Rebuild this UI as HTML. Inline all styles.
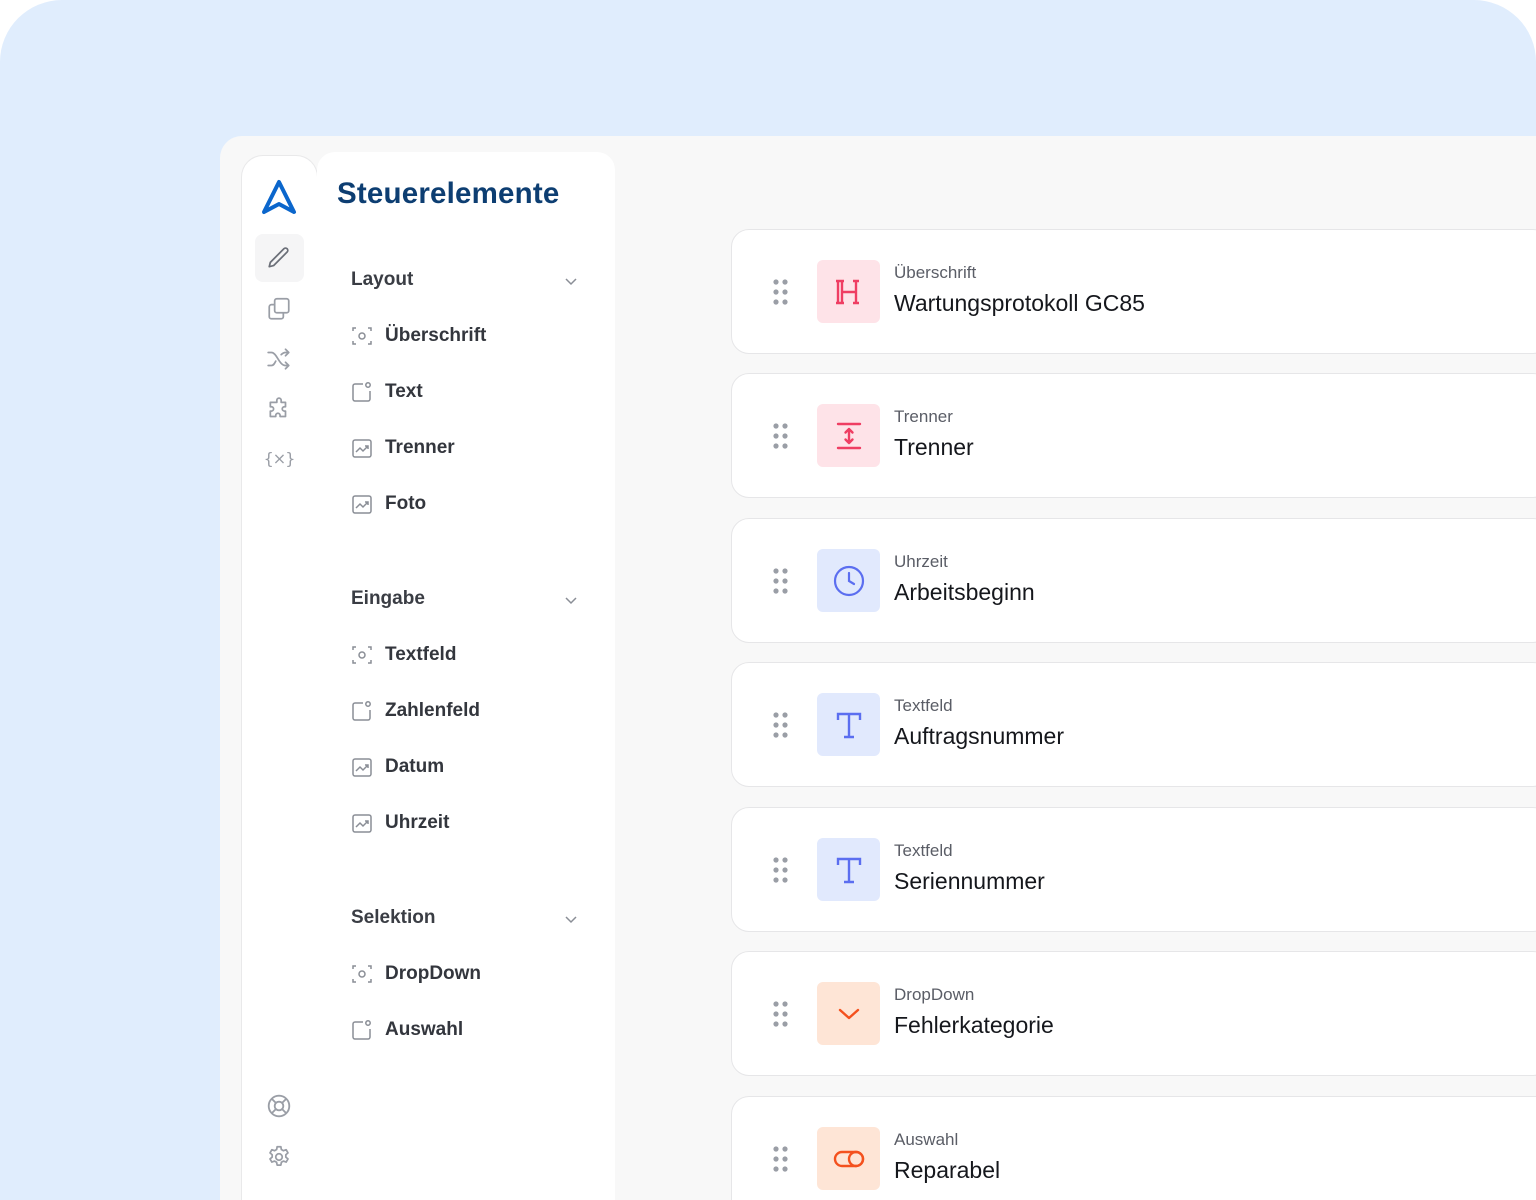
<!DOCTYPE html>
<html><head><meta charset="utf-8"><style>
*{box-sizing:border-box;margin:0;padding:0}
html,body{width:1536px;height:1200px;overflow:hidden;background:#fff;font-family:"Liberation Sans",sans-serif;position:relative}
.outer{position:absolute;left:0;top:0;width:1536px;height:1200px;background:#e0edfd;border-radius:62px 62px 0 0}
.app{position:absolute;left:220px;top:136px;width:1316px;height:1064px;background:#f8f8f8;border-radius:22px 0 0 0}
.rail{position:absolute;left:241px;top:155px;width:77px;height:1045px;background:#fff;border:1.5px solid #e9e9ea;border-bottom:none;border-radius:22px 22px 0 0}
.panel{position:absolute;left:317px;top:152px;width:298px;height:1048px;background:#fff;border-radius:18px 18px 0 0}
.ri{position:absolute;left:0;width:74px;display:flex;justify-content:center}
.h1{position:absolute;left:337px;top:177px;font-size:29.5px;font-weight:bold;color:#0d3e72;letter-spacing:0.2px}
.sec{position:absolute;left:351px;font-size:19px;font-weight:bold;color:#3a3d44}
.chev{position:absolute;left:564px}
.item{position:absolute;left:351px;font-size:19px;font-weight:bold;color:#33363d;display:flex;align-items:center}
.item svg{margin-right:12px}
.card{position:absolute;left:731px;width:820px;height:125px;background:#fff;border:1.5px solid #e6e6e8;border-radius:18px}
.dots{position:absolute;left:41px;top:49px}
.ic{position:absolute;left:85px;top:30px;width:63px;height:63px;border-radius:6px;display:flex;align-items:center;justify-content:center}
.lab{position:absolute;left:162px;top:33px;font-size:17px;color:#5a5d66}
.tit{position:absolute;left:162px;top:60px;font-size:23px;color:#15171c}
</style></head><body>
<div class="outer"></div>
<div class="app"></div>
<div class="rail">
 <div class="ri" style="top:22px"><svg width="40" height="40" viewBox="0 0 40 40"><path d="M20 4 L35 34 L20 26 L5 34 Z" fill="none" stroke="#0b66cc" stroke-width="4" stroke-linejoin="round"/></svg></div>
 <div style="position:absolute;left:13px;top:78px;width:49px;height:48px;background:#f5f5f6;border-radius:8px"></div>
 <div class="ri" style="top:89px"><svg width="26" height="26" viewBox="0 0 24 24" fill="none" stroke="#6b6f78" stroke-width="1.6" stroke-linecap="round" stroke-linejoin="round"><path d="M16.5 3.5a2.1 2.1 0 0 1 3 3L7 19l-4 1 1-4Z"/></svg></div>
 <div class="ri" style="top:140px"><svg width="26" height="26" viewBox="0 0 24 24" fill="none" stroke="#9a9ea6" stroke-width="1.6" stroke-linejoin="round"><rect x="8" y="2.5" width="13" height="13" rx="2"/><path d="M16 15.5V19a2 2 0 0 1-2 2H5a2 2 0 0 1-2-2v-9a2 2 0 0 1 2-2h3"/></svg></div>
 <div class="ri" style="top:190px"><svg width="26" height="26" viewBox="0 0 24 24" fill="none" stroke="#9a9ea6" stroke-width="1.6" stroke-linecap="round" stroke-linejoin="round"><path d="M2 6h3c5 0 7 12 13 12h3M18 15l3 3-3 3M2 18h3c2 0 3-2 4-4M14 8c1-1 2-2 4-2h3M18 3l3 3-3 3"/></svg></div>
 <div class="ri" style="top:241px"><svg width="26" height="26" viewBox="0 0 24 24" fill="none" stroke="#9a9ea6" stroke-width="1.6" stroke-linejoin="round"><path d="M10 3a2 2 0 0 1 4 0v2h4v4h-1a2 2 0 0 0 0 4h1v5h-5v-1a2 2 0 0 0-4 0v1H4v-5h1a2 2 0 0 0 0-4H4V5h6Z"/></svg></div>
 <div class="ri" style="top:293px;font-size:16px;color:#9a9ea6;font-family:'DejaVu Sans',sans-serif;letter-spacing:-1px">{×}</div>
 <div class="ri" style="top:937px"><svg width="26" height="26" viewBox="0 0 24 24" fill="none" stroke="#9a9ea6" stroke-width="1.7"><circle cx="12" cy="12" r="9.5"/><circle cx="12" cy="12" r="4"/><path d="M5.3 5.3l3.9 3.9M14.8 14.8l3.9 3.9M18.7 5.3l-3.9 3.9M9.2 14.8l-3.9 3.9"/></svg></div>
 <div class="ri" style="top:988px"><svg width="26" height="26" viewBox="0 0 24 24" fill="none" stroke="#9a9ea6" stroke-width="1.6" stroke-linejoin="round"><circle cx="12" cy="12" r="3"/><path d="M10.3 2.5h3.4l.5 2.6 1.9 1.1 2.5-.9 1.7 2.9-2 1.7v2.2l2 1.7-1.7 2.9-2.5-.9-1.9 1.1-.5 2.6h-3.4l-.5-2.6-1.9-1.1-2.5.9-1.7-2.9 2-1.7v-2.2l-2-1.7 1.7-2.9 2.5.9 1.9-1.1Z"/></svg></div>
</div>
<div class="panel"></div>
<div class="h1">Steuerelemente</div>

<div class="sec" style="top:269px">Layout</div>
<div class="sec" style="top:588px">Eingabe</div>
<div class="sec" style="top:907px">Selektion</div>
<svg class="chev" style="top:274px" width="14" height="14" viewBox="0 0 14 14"><path d="M2 5l5 5 5-5" fill="none" stroke="#8a8e96" stroke-width="1.5"/></svg>
<svg class="chev" style="top:593px" width="14" height="14" viewBox="0 0 14 14"><path d="M2 5l5 5 5-5" fill="none" stroke="#8a8e96" stroke-width="1.5"/></svg>
<svg class="chev" style="top:912px" width="14" height="14" viewBox="0 0 14 14"><path d="M2 5l5 5 5-5" fill="none" stroke="#8a8e96" stroke-width="1.5"/></svg>

<div class="item" style="top:325px"><svg width="22" height="22" viewBox="0 0 22 22" fill="none" stroke="#8a8e96" stroke-width="1.5"><path d="M2 6V3h3M17 3h3v3M20 16v3h-3M5 19H2v-3"/><circle cx="11" cy="11" r="3"/></svg>Überschrift</div>
<div class="item" style="top:381px"><svg width="22" height="22" viewBox="0 0 22 22" fill="none" stroke="#8a8e96" stroke-width="1.5"><path d="M12 3H4a2 2 0 0 0-2 2v13a2 2 0 0 0 2 2h13a2 2 0 0 0 2-2v-8"/><circle cx="17" cy="4" r="2.2"/></svg>Text</div>
<div class="item" style="top:437px"><svg width="22" height="22" viewBox="0 0 22 22" fill="none" stroke="#8a8e96" stroke-width="1.5"><rect x="2" y="3" width="18" height="17" rx="2"/><path d="M5 15l4-4 3 3 5-5M14 9h3v3"/></svg>Trenner</div>
<div class="item" style="top:493px"><svg width="22" height="22" viewBox="0 0 22 22" fill="none" stroke="#8a8e96" stroke-width="1.5"><rect x="2" y="3" width="18" height="17" rx="2"/><path d="M5 15l4-4 3 3 5-5M14 9h3v3"/></svg>Foto</div>

<div class="item" style="top:644px"><svg width="22" height="22" viewBox="0 0 22 22" fill="none" stroke="#8a8e96" stroke-width="1.5"><path d="M2 6V3h3M17 3h3v3M20 16v3h-3M5 19H2v-3"/><circle cx="11" cy="11" r="3"/></svg>Textfeld</div>
<div class="item" style="top:700px"><svg width="22" height="22" viewBox="0 0 22 22" fill="none" stroke="#8a8e96" stroke-width="1.5"><path d="M12 3H4a2 2 0 0 0-2 2v13a2 2 0 0 0 2 2h13a2 2 0 0 0 2-2v-8"/><circle cx="17" cy="4" r="2.2"/></svg>Zahlenfeld</div>
<div class="item" style="top:756px"><svg width="22" height="22" viewBox="0 0 22 22" fill="none" stroke="#8a8e96" stroke-width="1.5"><rect x="2" y="3" width="18" height="17" rx="2"/><path d="M5 15l4-4 3 3 5-5M14 9h3v3"/></svg>Datum</div>
<div class="item" style="top:812px"><svg width="22" height="22" viewBox="0 0 22 22" fill="none" stroke="#8a8e96" stroke-width="1.5"><rect x="2" y="3" width="18" height="17" rx="2"/><path d="M5 15l4-4 3 3 5-5M14 9h3v3"/></svg>Uhrzeit</div>

<div class="item" style="top:963px"><svg width="22" height="22" viewBox="0 0 22 22" fill="none" stroke="#8a8e96" stroke-width="1.5"><path d="M2 6V3h3M17 3h3v3M20 16v3h-3M5 19H2v-3"/><circle cx="11" cy="11" r="3"/></svg>DropDown</div>
<div class="item" style="top:1019px"><svg width="22" height="22" viewBox="0 0 22 22" fill="none" stroke="#8a8e96" stroke-width="1.5"><path d="M12 3H4a2 2 0 0 0-2 2v13a2 2 0 0 0 2 2h13a2 2 0 0 0 2-2v-8"/><circle cx="17" cy="4" r="2.2"/></svg>Auswahl</div>

<div class="card" style="top:229px"><svg class="dots" width="16" height="26" viewBox="0 0 16 26" fill="#9a9ea6"><circle cx="3" cy="3" r="2.6"/><circle cx="12" cy="3" r="2.6"/><circle cx="3" cy="13" r="2.6"/><circle cx="12" cy="13" r="2.6"/><circle cx="3" cy="23" r="2.6"/><circle cx="12" cy="23" r="2.6"/></svg>
<div class="ic" style="background:#fee3e8"><svg width="28" height="28" viewBox="0 0 28 28" fill="none" stroke="#ef3e63" stroke-width="2.4"><path d="M3 3v22M7 3v22M7 14h14M21 3v22M1 3h8M1 25h8M18 3h6M18 25h6"/></svg></div>
<div class="lab">Überschrift</div><div class="tit">Wartungsprotokoll GC85</div></div>

<div class="card" style="top:373px"><svg class="dots" width="16" height="26" viewBox="0 0 16 26" fill="#9a9ea6"><circle cx="3" cy="3" r="2.6"/><circle cx="12" cy="3" r="2.6"/><circle cx="3" cy="13" r="2.6"/><circle cx="12" cy="13" r="2.6"/><circle cx="3" cy="23" r="2.6"/><circle cx="12" cy="23" r="2.6"/></svg>
<div class="ic" style="background:#fee3e8"><svg width="28" height="30" viewBox="0 0 28 30" fill="none" stroke="#ef3e63" stroke-width="2.4" stroke-linecap="round" stroke-linejoin="round"><path d="M3 3h22M3 27h22M14 8v14M10.5 11.5 14 8l3.5 3.5M10.5 18.5 14 22l3.5-3.5"/></svg></div>
<div class="lab">Trenner</div><div class="tit">Trenner</div></div>

<div class="card" style="top:518px"><svg class="dots" width="16" height="26" viewBox="0 0 16 26" fill="#9a9ea6"><circle cx="3" cy="3" r="2.6"/><circle cx="12" cy="3" r="2.6"/><circle cx="3" cy="13" r="2.6"/><circle cx="12" cy="13" r="2.6"/><circle cx="3" cy="23" r="2.6"/><circle cx="12" cy="23" r="2.6"/></svg>
<div class="ic" style="background:#e1e9fd"><svg width="32" height="32" viewBox="0 0 32 32" fill="none" stroke="#5b6ef0" stroke-width="2.2" stroke-linecap="round"><circle cx="16" cy="16" r="14"/><path d="M16 8v8l5 3"/></svg></div>
<div class="lab">Uhrzeit</div><div class="tit">Arbeitsbeginn</div></div>

<div class="card" style="top:662px"><svg class="dots" width="16" height="26" viewBox="0 0 16 26" fill="#9a9ea6"><circle cx="3" cy="3" r="2.6"/><circle cx="12" cy="3" r="2.6"/><circle cx="3" cy="13" r="2.6"/><circle cx="12" cy="13" r="2.6"/><circle cx="3" cy="23" r="2.6"/><circle cx="12" cy="23" r="2.6"/></svg>
<div class="ic" style="background:#e1e9fd"><svg width="28" height="28" viewBox="0 0 28 28" fill="none" stroke="#5b6ef0" stroke-width="2.4"><path d="M3 9V3h22v6M14 3v23M9 26h10"/></svg></div>
<div class="lab">Textfeld</div><div class="tit">Auftragsnummer</div></div>

<div class="card" style="top:807px"><svg class="dots" width="16" height="26" viewBox="0 0 16 26" fill="#9a9ea6"><circle cx="3" cy="3" r="2.6"/><circle cx="12" cy="3" r="2.6"/><circle cx="3" cy="13" r="2.6"/><circle cx="12" cy="13" r="2.6"/><circle cx="3" cy="23" r="2.6"/><circle cx="12" cy="23" r="2.6"/></svg>
<div class="ic" style="background:#e1e9fd"><svg width="28" height="28" viewBox="0 0 28 28" fill="none" stroke="#5b6ef0" stroke-width="2.4"><path d="M3 9V3h22v6M14 3v23M9 26h10"/></svg></div>
<div class="lab">Textfeld</div><div class="tit">Seriennummer</div></div>

<div class="card" style="top:951px"><svg class="dots" width="16" height="26" viewBox="0 0 16 26" fill="#9a9ea6"><circle cx="3" cy="3" r="2.6"/><circle cx="12" cy="3" r="2.6"/><circle cx="3" cy="13" r="2.6"/><circle cx="12" cy="13" r="2.6"/><circle cx="3" cy="23" r="2.6"/><circle cx="12" cy="23" r="2.6"/></svg>
<div class="ic" style="background:#fee5d6"><svg width="24" height="14" viewBox="0 0 24 14" fill="none" stroke="#f4511e" stroke-width="2.4" stroke-linecap="round" stroke-linejoin="round"><path d="M3 3l9 8 9-8"/></svg></div>
<div class="lab">DropDown</div><div class="tit">Fehlerkategorie</div></div>

<div class="card" style="top:1096px;height:104px;border-bottom:none;border-radius:18px 0 0 0"><svg class="dots" width="16" height="26" viewBox="0 0 16 26" fill="#9a9ea6"><circle cx="3" cy="3" r="2.6"/><circle cx="12" cy="3" r="2.6"/><circle cx="3" cy="13" r="2.6"/><circle cx="12" cy="13" r="2.6"/><circle cx="3" cy="23" r="2.6"/><circle cx="12" cy="23" r="2.6"/></svg>
<div class="ic" style="background:#fee5d6"><svg width="32" height="18" viewBox="0 0 32 18" fill="none" stroke="#f4511e" stroke-width="2.4"><rect x="2" y="2" width="28" height="14" rx="7"/><circle cx="23" cy="9" r="7"/></svg></div>
<div class="lab">Auswahl</div><div class="tit">Reparabel</div></div>
</body></html>
